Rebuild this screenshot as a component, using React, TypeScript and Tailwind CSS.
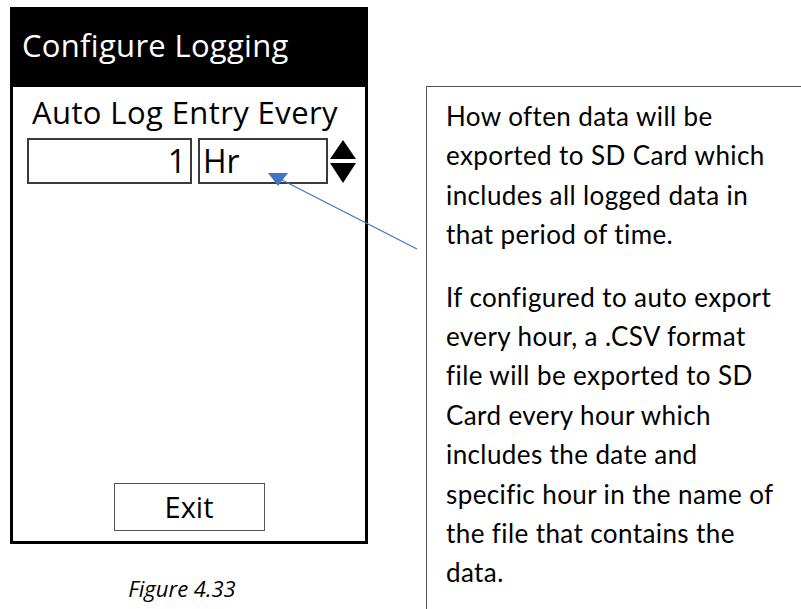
const noteTop = [
  "How often data will be",
  "exported to SD Card which",
  "includes all logged data in",
  "that period of time.",
];

const noteBottom = [
  "If configured to auto export",
  "every hour, a .CSV format",
  "file will be exported to SD",
  "Card every hour which",
  "includes the date and",
  "specific hour in the name of",
  "the file that contains the",
  "data.",
];

export default function App() {
  return (
    <div className="relative w-[801px] h-[609px] overflow-hidden bg-white text-black">
      <div className="flex">
        {/* Device screen */}
        <div className="shrink-0 flex flex-col pl-[10px] pt-[7px] w-[426px]">
          <div className="w-[358px] h-[537px] border-[3px] border-black flex flex-col font-['Open_Sans',sans-serif]">
            <div className="h-[77px] bg-black text-white text-[31px] tracking-[0.3px] pl-[9px] pt-[16px] leading-[38px] whitespace-nowrap">
              Configure Logging
            </div>
            <div className="flex-1 flex flex-col pl-[14px] pr-[9px]">
              <div className="text-[31px] tracking-[0.4px] leading-[36px] pt-[7px] pl-[5px] whitespace-nowrap">Auto Log Entry Every</div>
              <div className="flex items-center mt-[8px]">
                <div className="w-[165px] h-[46px] border-2 border-[#3a3a3a] text-[32px] leading-[42px] text-right pr-[4px]">1</div>
                <div className="w-[130px] h-[46px] ml-[6px] border-2 border-[#3a3a3a] text-[32px] leading-[42px] pl-[3px]">Hr</div>
                <div className="flex flex-col ml-[2px] gap-[4px]">
                  <svg width="26" height="19" viewBox="0 0 26 19"><path d="M13 0 L26 19 L0 19 Z" fill="#000" /></svg>
                  <svg width="26" height="20" viewBox="0 0 26 20"><path d="M0 0 L26 0 L13 20 Z" fill="#000" /></svg>
                </div>
              </div>
              <div className="flex-1" />
              <div className="flex justify-center mb-[10px] pr-[5px]">
                <div className="w-[151px] h-[48px] border-[1.5px] border-[#555] text-[29px] leading-[45px] text-center">Exit</div>
              </div>
            </div>
          </div>
          <div className="w-[358px] pr-[14px] text-center italic text-[22px] leading-[28px] mt-[30px] font-['Open_Sans',sans-serif]">Figure 4.33</div>
        </div>

        {/* Note box */}
        <div className="shrink-0 mt-[86px] w-[420px] h-[560px] border-l-[1.5px] border-t-[1.5px] border-[#555] pl-[19px] pt-[10px] font-['Lato',sans-serif] text-[26px] tracking-[0.4px] leading-[39.4px] whitespace-nowrap">
          <p>
            {noteTop.map((line) => (
              <span key={line} className="block">{line}</span>
            ))}
          </p>
          <p className="mt-[23px]">
            {noteBottom.map((line) => (
              <span key={line} className="block">{line}</span>
            ))}
          </p>
        </div>
      </div>

      {/* Callout arrow */}
      <svg className="absolute left-0 top-0 pointer-events-none" width="801" height="609">
        <line x1="417" y1="249" x2="282" y2="180" stroke="#4472C4" strokeWidth="1.2" />
        <path d="M268 173 L288 173 L278 186 Z" fill="#4472C4" />
      </svg>
    </div>
  );
}
